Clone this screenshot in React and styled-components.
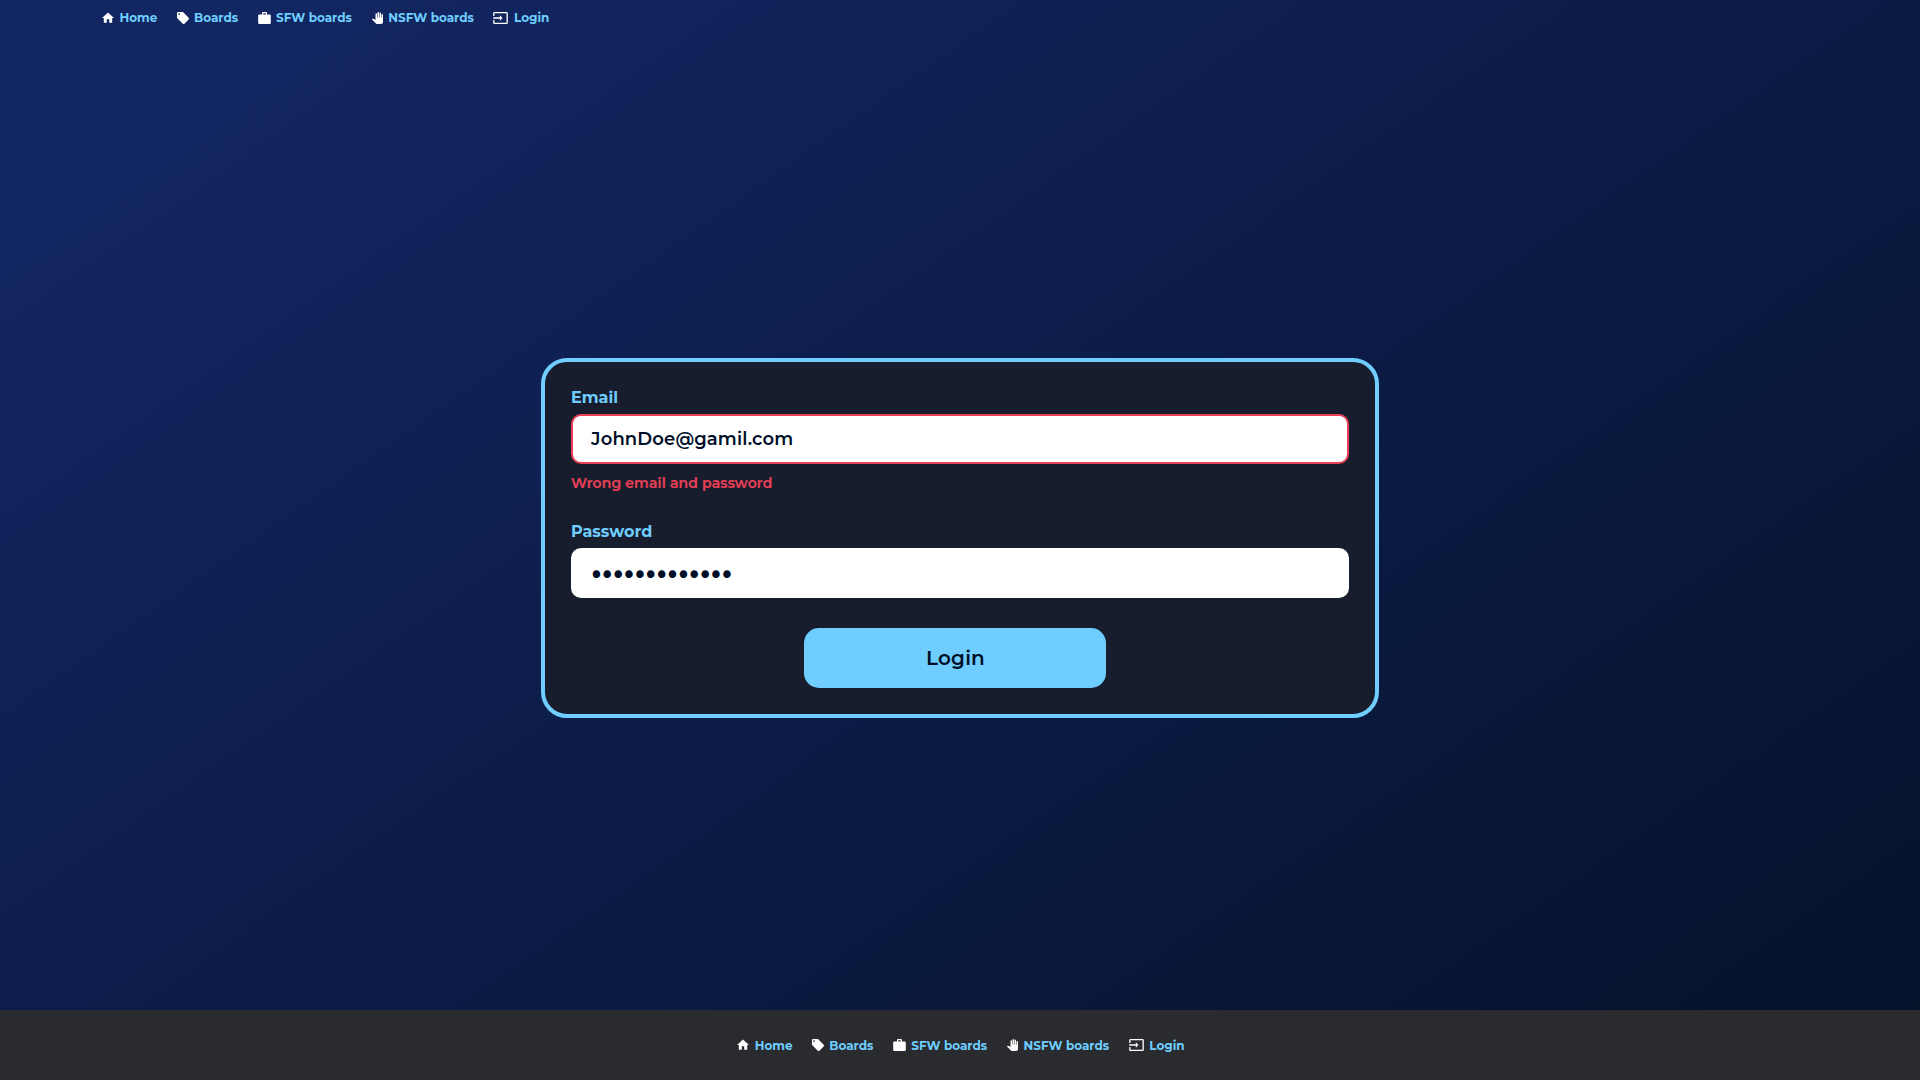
import React from "react";
import styled, { createGlobalStyle } from "styled-components";
import { MdHome, MdLocalOffer, MdWork, MdPanTool, MdInput } from "react-icons/md";

const GlobalStyle = createGlobalStyle`
  *, *::before, *::after { box-sizing: border-box; }
  body {
    margin: 0;
    font-family: Montserrat, Inter, "Open Sans", sans-serif;
    color: #000f28;
  }
`;

const Page = styled.div`
  display: flex;
  flex-direction: column;
  height: 100vh;
  background: linear-gradient(145deg, #122662 8%, #051027 102%);
`;

const Header = styled.header`
  height: 36px;
  padding: 0 0 1px 102px;
  display: flex;
  align-items: center;
`;

const Footer = styled.footer`
  height: 70px;
  display: flex;
  align-items: center;
  justify-content: center;
  background: #292b2f;
`;

const Nav = styled.nav`
  display: flex;
  align-items: center;
  gap: 18.5px;
`;

const NavLink = styled.a`
  display: flex;
  align-items: center;
  gap: 5.5px;
  color: #6fceff;
  font-size: 12px;
  font-weight: 700;
  line-height: 15px;
  text-decoration: none;

  svg {
    display: block;
    flex: none;
    width: ${({ $iconWidth }) => $iconWidth}px;
    height: 12px;
    color: #fff;
  }
`;

const NavLabel = styled.span`
  width: ${({ $width }) => $width}px;
  white-space: nowrap;
`;

const Main = styled.main`
  flex: 1;
  display: flex;
  flex-direction: column;
  align-items: center;
  padding-top: 322px;
`;

const Card = styled.form`
  width: 838px;
  height: 360px;
  padding: 26px;
  border: 4px solid #6fceff;
  border-radius: 26px;
  background: #181d2e;
  display: flex;
  flex-direction: column;
`;

const Label = styled.label`
  height: 26px;
  font-size: 16px;
  font-weight: 700;
  line-height: 20px;
  color: #6fceff;
`;

const Input = styled.input`
  width: 778px;
  height: 50px;
  padding: 0 18px;
  border: 2px solid ${({ $invalid }) => ($invalid ? "#e94057" : "#fff")};
  border-radius: 10px;
  outline: none;
  background: #fff;
  color: #000f28;
  font-family: inherit;
  font-size: 18px;
  font-weight: 600;
  letter-spacing: 0.14px;

  &[type="password"] {
    padding-top: 4px;
    font-family: "DejaVu Sans", sans-serif;
    font-size: 17px;
    font-weight: 700;
    letter-spacing: 0;
    -webkit-text-stroke: 1.5px #000f28;
  }
`;

const ErrorText = styled.p`
  height: 58px;
  margin: 0;
  padding-top: 10px;
  font-size: 14px;
  font-weight: 600;
  line-height: 18px;
  letter-spacing: 0.13px;
  color: #e94057;
  -webkit-text-stroke: 0.2px #e94057;
`;

const Submit = styled.button`
  width: 302px;
  height: 60px;
  margin: 30px 0 0 233px;
  padding: 0 0 0 1px;
  border: 0;
  border-radius: 15px;
  background: #6fceff;
  color: #000f28;
  font-family: inherit;
  font-size: 20px;
  font-weight: 600;
  letter-spacing: 0.15px;
`;

const links = [
  { label: "Home", Icon: MdHome, box: "2 2 20 20", iconWidth: 12, width: 38.5 },
  { label: "Boards", Icon: MdLocalOffer, box: "2 2 20 20", iconWidth: 12, width: 45 },
  { label: "SFW boards", Icon: MdWork, box: "2 2 20 19", iconWidth: 13, width: 77.3 },
  { label: "NSFW boards", Icon: MdPanTool, box: "1 0 22 24", iconWidth: 11, width: 86.7 },
  { label: "Login", Icon: MdInput, box: "1 3 22 18", iconWidth: 15, width: 33.5 },
];

const NavLinks = () => (
  <Nav>
    {links.map(({ label, Icon, box, iconWidth, width }) => (
      <NavLink key={label} $iconWidth={iconWidth}>
        <Icon viewBox={box} />
        <NavLabel $width={width}>{label}</NavLabel>
      </NavLink>
    ))}
  </Nav>
);

export default function App() {
  return (
    <>
      <GlobalStyle />
      <Page>
        <Header>
          <NavLinks />
        </Header>
        <Main>
          <Card>
            <Label htmlFor="email">Email</Label>
            <Input id="email" type="text" defaultValue="JohnDoe@gamil.com" $invalid />
            <ErrorText>Wrong email and password</ErrorText>
            <Label htmlFor="password">Password</Label>
            <Input id="password" type="password" defaultValue="password12345" />
            <Submit type="button">Login</Submit>
          </Card>
        </Main>
        <Footer>
          <NavLinks />
        </Footer>
      </Page>
    </>
  );
}
